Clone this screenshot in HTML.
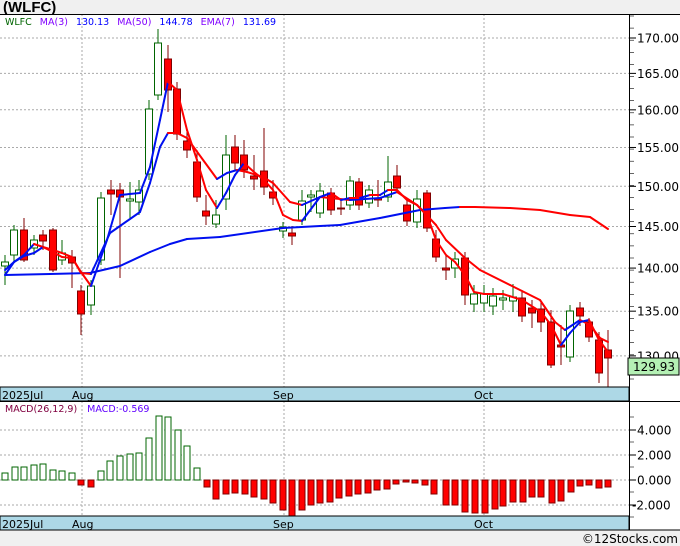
<!DOCTYPE html>
<html><head><meta charset="utf-8"><style>
body{margin:0;width:680px;height:546px;background:#f0f0f0;overflow:hidden;font-family:"Liberation Sans","DejaVu Sans",sans-serif}
svg{position:absolute;left:0;top:0}
</style></head><body>
<svg id="s" width="680" height="546" xmlns="http://www.w3.org/2000/svg" font-family="DejaVu Sans, Liberation Sans, sans-serif">
<rect x="0" y="0" width="680" height="546" fill="#f0f0f0"/>
<text x="3" y="12" font-size="15" font-weight="bold" font-family="Liberation Sans, sans-serif" fill="#000">(WLFC)</text>
<rect x="0" y="14" width="680" height="516" fill="#fff"/>
<g id="g"></g>
</svg>
<script>
var g=document.getElementById('g'),h='';
function Y(p){return 38+1185*(Math.log(170)-Math.log(p));}
[130,135,140,145,150,155,160,165,170].forEach(function(p){var y=Y(p).toFixed(1);h+='<line x1="0" x2="629" y1="'+y+'" y2="'+y+'" stroke="#aaa" stroke-dasharray="2,2"/>';});
[82,284,484].forEach(function(x){h+='<line x1="'+x+'" x2="'+x+'" y1="14" y2="387" stroke="#aaa" stroke-dasharray="2,2"/><line x1="'+x+'" x2="'+x+'" y1="401" y2="516" stroke="#aaa" stroke-dasharray="2,2"/>';});
[430,455,480,505].forEach(function(y){h+='<line x1="0" x2="629" y1="'+y+'" y2="'+y+'" stroke="#aaa" stroke-dasharray="2,2"/>';});
var c=[[5,262,266,255,285,0],[14,230,255,225,262,0],[24,230,260,218,262,1],[34,240,248,235,255,0],[43,235,241,230,250,1],[53,230,270,228,272,1],[62,253,260,240,265,0],[72,257,263,250,288,1],[81,291,314,285,335,1],[91,286,305,280,315,0],
[101,198,260,192,265,0],[111,190,194,180,215,1],[120,190,197,183,278,1],[130,199,201,182,220,0],[139,190,202,180,215,0],[149,109,174,100,180,0],[158,43,95,29,100,0],[168,59,90,45,112,1],[177,89,134,82,140,1],[187,141,150,132,158,1],[197,162,197,150,202,1],[206,211,216,195,225,1],[216,215,224,200,228,0],[226,155,199,135,210,0],[235,147,163,135,170,1],[244,155,170,140,178,1],[254,176,179,155,190,1],[264,171,187,128,195,1],[273,192,198,180,205,1],[283,227,231,222,238,0],[292,233,236,226,245,1],[302,201,220,190,225,0],[311,195,197,190,212,0],[320,191,213,183,218,0],[331,193,210,188,215,1],[341,208,209,200,215,1],[350,181,205,176,210,0],[359,182,205,178,210,1],[369,190,203,185,208,0],[378,198,200,180,207,1],[388,182,197,156,202,0],[397,176,188,165,192,1],[407,205,221,198,226,1],[417,199,222,190,228,0],[427,193,228,190,232,1],[436,239,257,230,262,1],[446,268,270,255,280,1],[455,259,268,252,278,0],[465,258,295,252,305,1],[474,294,304,285,312,0],[484,294,303,285,312,0],[493,296,306,288,315,0],[503,298,300,290,310,0],[513,297,301,284,312,0],[522,298,316,290,322,1],[532,308,313,300,328,1],[541,309,322,302,332,1],[551,322,365,310,368,1],[561,345,347,325,365,1],[570,311,357,305,362,0],[580,308,316,302,326,1],[589,322,337,318,342,1],[599,340,373,332,383,1],[608,350,358,330,388,1]];
c.forEach(function(k){var x=k[0],col=k[5]?'#800000':'#006400';
h+='<line x1="'+x+'" x2="'+x+'" y1="'+k[3]+'" y2="'+k[4]+'" stroke="'+col+'"/>';
h+='<rect x="'+(x-3.5)+'" y="'+k[1]+'" width="7" height="'+Math.max(1,k[2]-k[1])+'" fill="'+(k[5]?'#f00':'#fff')+'" stroke="'+col+'"/>';});
function pl(s){var p=s.split(' ').map(function(a){return a.split(',').map(Number);});
for(var i=1;i<p.length;i++){var col=p[i][1]<p[i-1][1]?'#0010f0':'#f00';
h+='<line x1="'+p[i-1][0]+'" y1="'+p[i-1][1]+'" x2="'+p[i][0]+'" y2="'+p[i][1]+'" stroke="'+col+'" stroke-width="2" stroke-linecap="round"/>';}}
pl('5,275 50,274 90,273 120,266 150,252 170,244 187,239 220,237 283,228 320,226 340,225 380,218 420,210 445,208 460,207 475,207 510,208 540,210 570,215 590,217 608,229');
pl('5,270 14,262 24,255 34,244 43,247 53,250 62,253 72,257 81,273 91,274 110,233 140,212 150,183 160,147 168,133 177,133 187,138 217,179 227,173 237,170 247,172 263,177 273,183 290,202 302,205 320,197 350,200 380,198 397,192 417,205 436,225 446,240 465,258 480,270 510,285 540,300 555,322 565,330 580,320 590,325 600,338 608,342');
pl('5,275 14,262 24,256 34,253 43,247 53,252 62,257 72,258 81,272 91,286 107,240 120,195 140,193 150,167 160,120 168,82 177,90 187,130 197,160 206,190 217,208 226,193 235,175 244,163 254,172 264,180 273,190 283,215 293,220 302,221 320,197 331,193 341,200 350,198 360,198 370,195 380,195 388,190 397,190 407,200 417,205 427,215 436,240 446,255 455,262 465,275 474,292 484,294 503,294 522,300 541,312 551,325 561,345 570,333 580,322 589,320 599,340 608,352');
var m=[[5,473],[15,467],[24,467],[34,465],[43,464],[53,470],[62,471],[72,473],[81,485],[91,487],[101,471],[110,461],[120,456],[130,454],[139,453],[149,438],[159,416],[168,417],[178,430],[187,446],[197,468],[207,487],[216,499],[226,494],[235,493],[245,494],[254,497],[264,499],[273,503],[283,510],[292,516],[302,510],[311,505],[320,503],[330,502],[339,498],[349,496],[358,494],[368,493],[377,490],[387,489],[396,484],[406,482],[415,483],[425,485],[434,494],[446,505],[455,505],[465,512],[475,513],[485,513],[495,509],[503,506],[513,502],[523,502],[532,497],[541,497],[552,503],[561,501],[571,492],[580,486],[589,485],[599,488],[608,487]];
m.forEach(function(k){var t=Math.min(k[1],480),b=Math.max(k[1],480);var red=k[1]>480;
h+='<rect x="'+(k[0]-3)+'" y="'+t+'" width="6" height="'+(b-t)+'" fill="'+(red?'#f00':'#fff')+'" stroke="'+(red?'#800000':'#006400')+'"/>';});
h+='<rect x="0" y="387" width="629" height="14" fill="#add8e6" stroke="#000"/><rect x="0" y="516" width="629" height="14" fill="#add8e6" stroke="#000"/>';
h+='<line x1="0" x2="680" y1="14.5" y2="14.5" stroke="#000"/><line x1="0" x2="680" y1="401.5" y2="401.5" stroke="#000"/><line x1="0" x2="680" y1="530" y2="530" stroke="#000"/>';
h+='<line x1="629.5" x2="629.5" y1="14" y2="530" stroke="#000"/>';
var lab=[['2025Jul',2],['Aug',72],['Sep',273],['Oct',474]];
lab.forEach(function(l){h+='<text x="'+l[1]+'" y="399" font-size="11" fill="#000">'+l[0]+'</text><text x="'+l[1]+'" y="528" font-size="11" fill="#000">'+l[0]+'</text>';});
for(var y=16;y<387;y+=12.1){h+='<line x1="629" x2="634" y1="'+y+'" y2="'+y+'" stroke="#000" stroke-width=".6"/>';}
[130,135,140,145,150,155,160,165,170].forEach(function(p){var y=Y(p);h+='<line x1="629" x2="636" y1="'+y+'" y2="'+y+'" stroke="#000"/><text x="637" y="'+(y+4.5)+'" font-size="12" fill="#000">'+p.toFixed(2)+'</text>';});
[[430,'4.000'],[455,'2.000'],[480,'0.000'],[505,'-2.000']].forEach(function(a){h+='<line x1="629" x2="636" y1="'+a[0]+'" y2="'+a[0]+'" stroke="#000"/><text x="'+(a[1][0]=='-'?632:637)+'" y="'+(a[0]+4.5)+'" font-size="12" fill="#000">'+a[1]+'</text>';});
[417,442,467,492,517].forEach(function(y){h+='<line x1="629" x2="634" y1="'+y+'" y2="'+y+'" stroke="#000" stroke-width=".6"/>';});
h+='<rect x="628" y="358" width="51" height="17" fill="#b4f0b4" stroke="#000"/><text x="633" y="371" font-size="12" fill="#000">129.93</text>';
h+='<text x="5" y="25" font-size="9.5"><tspan fill="#006400">WLFC</tspan><tspan fill="#8000ff" dx="8">MA(3)</tspan><tspan fill="#0000ff" dx="8">130.13</tspan><tspan fill="#8000ff" dx="8">MA(50)</tspan><tspan fill="#0000ff" dx="8">144.78</tspan><tspan fill="#8000ff" dx="8">EMA(7)</tspan><tspan fill="#0000ff" dx="8">131.69</tspan></text>';
h+='<text x="5" y="412" font-size="9.5"><tspan fill="#800040">MACD(26,12,9)</tspan><tspan fill="#6000ff" dx="10">MACD:-0.569</tspan></text>';
h+='<text x="678" y="543" font-size="12" text-anchor="end" fill="#000">©12Stocks.com</text>';
g.innerHTML=h;
</script>
</body></html>
